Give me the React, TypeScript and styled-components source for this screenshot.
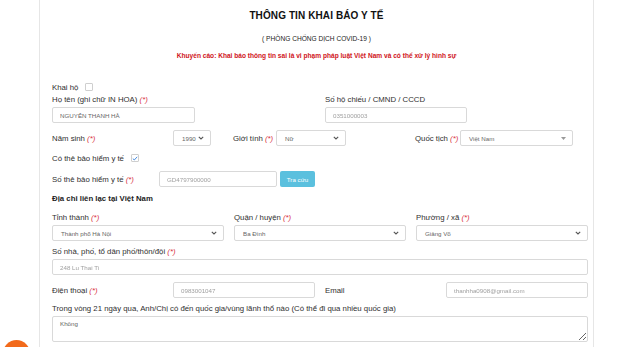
import styled, { createGlobalStyle } from "styled-components";

const GlobalStyle = createGlobalStyle`
   html, body {
      margin: 0;
      padding: 0;
      background: #fff;
      overflow: hidden;
   }
   body {
      font-family: "Liberation Sans", Arial, sans-serif;
      color: #333;
   }
`

const Page = styled.div`
   width: 640px;
   height: 347px;
   overflow: hidden;
   position: relative;
`

const Panel = styled.div`
   margin-left: 39px;
   width: 555px;
   min-height: 347px;
   border-left: 1px solid #e6e6e6;
   border-right: 1px solid #e6e6e6;
   padding: 0 4px 0 12px;
   box-sizing: border-box;
`

const Header = styled.div`
   display: flex;
   flex-direction: column;
   align-items: center;
   padding-top: 10px;
   margin-left: -12px;
   margin-right: -4px;
`

const Title = styled.h2`
   margin: 0;
   font-size: 10px;
   font-weight: bold;
   color: #111;
   letter-spacing: 0.1px;
`

const SubTitle = styled.div`
   margin-top: 14px;
   font-size: 6.6px;
   color: #222;
`

const Warning = styled.div`
   margin-top: 10px;
   font-size: 6.6px;
   font-weight: bold;
   color: #d0141b;
`

const Form = styled.div`
   margin-top: 23px;
   display: flex;
   flex-direction: column;
   width: 536px;
`

const Label = styled.span`
   font-size: 7.8px;
   color: #2f2f2f;
   white-space: nowrap;
`

const Req = styled.span`
   color: #d9333f;
   font-style: italic;
`

const InlineRow = styled.div<{ $top?: number }>`
   display: flex;
   align-items: center;
   gap: 7px;
   height: 10px;
   margin-top: ${p => p.$top ?? 0}px;
`

const Check = styled.span`
   width: 6px;
   height: 6px;
   border: 1px solid #cfcfcf;
   border-radius: 1px;
   display: inline-flex;
   align-items: center;
   justify-content: center;
   background: #fff;
   svg {
      display: block;
   }
`

const TwoCols = styled.div<{ $top?: number }>`
   display: grid;
   grid-template-columns: 263px 263px;
   column-gap: 10px;
   margin-top: ${p => p.$top ?? 0}px;
`

const Field = styled.div<{ $top?: number }>`
   display: flex;
   flex-direction: column;
   gap: 3px;
   margin-top: ${p => p.$top ?? 0}px;
`

const Input = styled.input<{ $w?: number; $blur?: boolean }>`
   box-sizing: border-box;
   width: ${p => (p.$w ? `${p.$w}px` : "100%")};
   height: 16px;
   border: 1px solid #d9d9d9;
   border-radius: 2px;
   padding: 0 7px;
   font-family: "Liberation Sans", Arial, sans-serif;
   font-size: 6.2px;
   color: ${p => (p.$blur ? "#a0a0a0" : "#666")};
   background: #fff;
   outline: none;
   ${p => p.$blur && "filter: blur(0.5px);"}
`

const Row = styled.div<{ $cols: string; $top?: number }>`
   display: grid;
   grid-template-columns: ${p => p.$cols};
   align-items: center;
   margin-top: ${p => p.$top ?? 0}px;
`

const SelectBox = styled.div`
   box-sizing: border-box;
   width: 100%;
   height: 16px;
   border: 1px solid #d9d9d9;
   border-radius: 2px;
   display: flex;
   align-items: center;
   justify-content: space-between;
   padding: 0 6px 0 8px;
   font-size: 6.2px;
   color: #666;
   background: #fff;
`

const Button = styled.button`
   height: 16px;
   width: 35px;
   margin-left: 3px;
   border: none;
   border-radius: 2px;
   background: #5bc0de;
   color: #fff;
   font-family: "Liberation Sans", Arial, sans-serif;
   font-size: 6.2px;
   padding: 0;
`

const Heading = styled.div<{ $top?: number }>`
   font-size: 7.8px;
   font-weight: bold;
   color: #222;
   margin-top: ${p => p.$top ?? 0}px;
`

const ThreeCols = styled.div<{ $top?: number }>`
   display: grid;
   grid-template-columns: repeat(3, 172px);
   column-gap: 10px;
   margin-top: ${p => p.$top ?? 0}px;
`

const TextArea = styled.textarea`
   box-sizing: border-box;
   width: 100%;
   height: 26px;
   border: 1px solid #d9d9d9;
   border-radius: 2px;
   padding: 3px 7px;
   font-family: "Liberation Sans", Arial, sans-serif;
   font-size: 6.2px;
   color: #666;
   outline: none;
   resize: vertical;
`

const FloatBtn = styled.div`
   position: absolute;
   left: 3px;
   top: 340px;
   width: 27px;
   height: 27px;
   border-radius: 50%;
   background: #f26a1b;
`

const Chevron = () => (
   <svg width="6" height="4" viewBox="0 0 6 4">
      <path d="M0.8 0.8 L3 3 L5.2 0.8" fill="none" stroke="#555" strokeWidth="1.1" />
   </svg>
)

const Caret = () => (
   <svg width="5" height="3" viewBox="0 0 5 3">
      <path d="M0 0 L5 0 L2.5 3 Z" fill="#999" />
   </svg>
)

export default function App() {
   return (
      <Page>
         <GlobalStyle />
         <Panel>
            <Header>
               <Title>THÔNG TIN KHAI BÁO Y TẾ</Title>
               <SubTitle>( PHÒNG CHỐNG DỊCH COVID-19 )</SubTitle>
               <Warning>Khuyến cáo: Khai báo thông tin sai là vi phạm pháp luật Việt Nam và có thể xử lý hình sự</Warning>
            </Header>
            <Form>
               <InlineRow>
                  <Label>Khai hộ</Label>
                  <Check />
               </InlineRow>
               <TwoCols $top={3}>
                  <Field>
                     <Label>Họ tên (ghi chữ IN HOA) <Req>(*)</Req></Label>
                     <Input $w={143} defaultValue="NGUYỄN THANH HÀ" />
                  </Field>
                  <Field>
                     <Label>Số hộ chiếu / CMND / CCCD</Label>
                     <Input $w={142} $blur defaultValue="0351000003" />
                  </Field>
               </TwoCols>
               <Row $cols="121px 38px 22px 43px 70px 69px 45px 113px" $top={7}>
                  <Label>Năm sinh <Req>(*)</Req></Label>
                  <SelectBox><span>1990</span><Chevron /></SelectBox>
                  <span />
                  <Label>Giới tính <Req>(*)</Req></Label>
                  <SelectBox><span>Nữ</span><Chevron /></SelectBox>
                  <span />
                  <Label>Quốc tịch <Req>(*)</Req></Label>
                  <SelectBox><span>Việt Nam</span><Caret /></SelectBox>
               </Row>
               <InlineRow $top={7}>
                  <Label>Có thẻ bảo hiểm y tế</Label>
                  <Check>
                     <svg width="6" height="5" viewBox="0 0 6 5">
                        <path d="M0.8 2.6 L2.3 4 L5.2 0.8" fill="none" stroke="#4a8ee0" strokeWidth="1" />
                     </svg>
                  </Check>
               </InlineRow>
               <Row $cols="107px 118px 38px" $top={8}>
                  <Label>Số thẻ bảo hiểm y tế <Req>(*)</Req></Label>
                  <Input $blur defaultValue="GD4797900000" />
                  <Button>Tra cứu</Button>
               </Row>
               <Heading $top={7}>Địa chỉ liên lạc tại Việt Nam</Heading>
               <ThreeCols $top={10}>
                  <Field>
                     <Label>Tỉnh thành <Req>(*)</Req></Label>
                     <SelectBox><span>Thành phố Hà Nội</span><Chevron /></SelectBox>
                  </Field>
                  <Field>
                     <Label>Quận / huyện <Req>(*)</Req></Label>
                     <SelectBox><span>Ba Đình</span><Chevron /></SelectBox>
                  </Field>
                  <Field>
                     <Label>Phường / xã <Req>(*)</Req></Label>
                     <SelectBox><span>Giảng Võ</span><Chevron /></SelectBox>
                  </Field>
               </ThreeCols>
               <Field $top={6}>
                  <Label>Số nhà, phố, tổ dân phố/thôn/đội <Req>(*)</Req></Label>
                  <Input $blur defaultValue="248 Lu Thai Ti" />
               </Field>
               <Row $cols="121px 142px 10px 121px 142px" $top={7}>
                  <Label>Điện thoại <Req>(*)</Req></Label>
                  <Input $blur defaultValue="0983001047" />
                  <span />
                  <Label>Email</Label>
                  <Input $blur defaultValue="thanhha0908@gmail.com" />
               </Row>
               <Field $top={6}>
                  <Label>Trong vòng 21 ngày qua, Anh/Chị có đến quốc gia/vùng lãnh thổ nào (Có thể đi qua nhiều quốc gia)</Label>
                  <TextArea defaultValue="Không" />
               </Field>
            </Form>
         </Panel>
         <FloatBtn />
      </Page>
   )
}
